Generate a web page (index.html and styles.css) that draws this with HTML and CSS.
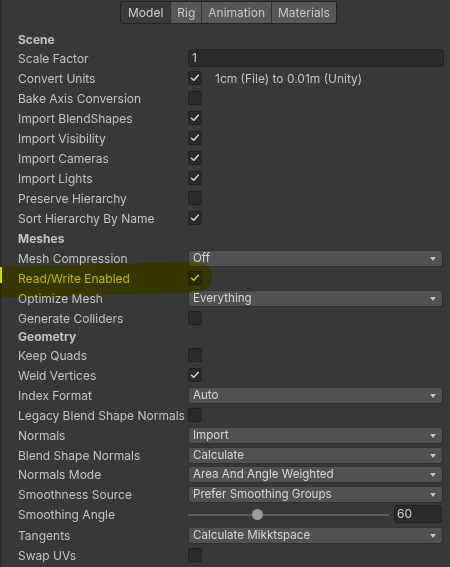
FILE: index.html
```html
<!DOCTYPE html>
<html>
<head>
<meta charset="utf-8">
<link rel="stylesheet" href="styles.css">
</head>
<body>
<div class="page">
  <div class="tabbar">
    <div class="tabs">
      <div class="tab active">Model</div>
      <div class="tab">Rig</div>
      <div class="tab">Animation</div>
      <div class="tab">Materials</div>
    </div>
  </div>

  <div class="form">
    <div class="row h19"><div class="label header">Scene</div></div>
    <div class="row"><div class="label">Scale Factor</div><div class="ctrl"><div class="textfield">1</div></div></div>
    <div class="row"><div class="label">Convert Units</div><div class="ctrl inline"><span class="cb on"><svg viewBox="0 0 14 14"><path d="M3.5 7.2 L5.8 9.3 L10.3 4.3"/></svg></span><span class="note">1cm (File) to 0.01m (Unity)</span></div></div>
    <div class="row"><div class="label">Bake Axis Conversion</div><div class="ctrl"><span class="cb"></span></div></div>
    <div class="row"><div class="label">Import BlendShapes</div><div class="ctrl"><span class="cb on"><svg viewBox="0 0 14 14"><path d="M3.5 7.2 L5.8 9.3 L10.3 4.3"/></svg></span></div></div>
    <div class="row"><div class="label">Import Visibility</div><div class="ctrl"><span class="cb on"><svg viewBox="0 0 14 14"><path d="M3.5 7.2 L5.8 9.3 L10.3 4.3"/></svg></span></div></div>
    <div class="row"><div class="label">Import Cameras</div><div class="ctrl"><span class="cb on"><svg viewBox="0 0 14 14"><path d="M3.5 7.2 L5.8 9.3 L10.3 4.3"/></svg></span></div></div>
    <div class="row"><div class="label">Import Lights</div><div class="ctrl"><span class="cb on"><svg viewBox="0 0 14 14"><path d="M3.5 7.2 L5.8 9.3 L10.3 4.3"/></svg></span></div></div>
    <div class="row"><div class="label">Preserve Hierarchy</div><div class="ctrl"><span class="cb"></span></div></div>
    <div class="row"><div class="label">Sort Hierarchy By Name</div><div class="ctrl"><span class="cb on"><svg viewBox="0 0 14 14"><path d="M3.5 7.2 L5.8 9.3 L10.3 4.3"/></svg></span></div></div>

    <div class="row"><div class="label header">Meshes</div></div>
    <div class="row"><div class="label">Mesh Compression</div><div class="ctrl"><div class="dropdown"><span>Off</span><i class="arrow"></i></div></div></div>
    <div class="row hl"><div class="label">Read/Write Enabled</div><div class="ctrl"><span class="cb on"><svg viewBox="0 0 14 14"><path d="M3.5 7.2 L5.8 9.3 L10.3 4.3"/></svg></span></div></div>
    <div class="row"><div class="label">Optimize Mesh</div><div class="ctrl"><div class="dropdown"><span>Everything</span><i class="arrow"></i></div></div></div>
    <div class="row h19"><div class="label">Generate Colliders</div><div class="ctrl"><span class="cb"></span></div></div>

    <div class="row h18"><div class="label header">Geometry</div></div>
    <div class="row"><div class="label">Keep Quads</div><div class="ctrl"><span class="cb"></span></div></div>
    <div class="row"><div class="label">Weld Vertices</div><div class="ctrl"><span class="cb on"><svg viewBox="0 0 14 14"><path d="M3.5 7.2 L5.8 9.3 L10.3 4.3"/></svg></span></div></div>
    <div class="row"><div class="label">Index Format</div><div class="ctrl"><div class="dropdown"><span>Auto</span><i class="arrow"></i></div></div></div>
    <div class="row"><div class="label">Legacy Blend Shape Normals</div><div class="ctrl"><span class="cb"></span></div></div>
    <div class="row"><div class="label">Normals</div><div class="ctrl"><div class="dropdown"><span>Import</span><i class="arrow"></i></div></div></div>
    <div class="row h19"><div class="label">Blend Shape Normals</div><div class="ctrl"><div class="dropdown"><span>Calculate</span><i class="arrow"></i></div></div></div>
    <div class="row"><div class="label">Normals Mode</div><div class="ctrl"><div class="dropdown"><span>Area And Angle Weighted</span><i class="arrow"></i></div></div></div>
    <div class="row"><div class="label">Smoothness Source</div><div class="ctrl"><div class="dropdown"><span>Prefer Smoothing Groups</span><i class="arrow"></i></div></div></div>
    <div class="row h21"><div class="label">Smoothing Angle</div><div class="ctrl slider"><div class="track"><div class="thumb"></div></div><div class="numfield">60</div></div></div>
    <div class="row"><div class="label">Tangents</div><div class="ctrl"><div class="dropdown"><span>Calculate Mikktspace</span><i class="arrow"></i></div></div></div>
    <div class="row"><div class="label">Swap UVs</div><div class="ctrl"><span class="cb"></span></div></div>
  </div>

  <div class="marker"></div>
  <div class="marker-edge"></div>
</div>
</body>
</html>
```
FILE: styles.css
```css
html, body {
  margin: 0;
  padding: 0;
  background: #383838;
}
body {
  width: 450px;
  height: 567px;
  overflow: hidden;
  font-family: Inter, "Liberation Sans", sans-serif;
  font-size: 12px;
  color: #c4c4c4;
}
.page {
  position: relative;
  width: 450px;
  height: 567px;
  box-sizing: border-box;
  border-left: 2px solid #2c2c2c;
  border-right: 1px solid #3e3e3e;
}
.tabbar {
  height: 30px;
  box-sizing: border-box;
  padding: 1px 0 0 6px;
  display: flex;
  justify-content: center;
}
.tabs {
  display: flex;
  height: 23px;
  box-sizing: border-box;
  border: 1px solid #232323;
  border-radius: 3px;
  overflow: hidden;
}
.tab {
  padding: 0 6px;
  line-height: 21px;
  background: #585858;
  color: #c8c8c8;
  border-left: 1px solid #303030;
}
.tab:first-child { border-left: none; }
.tab.active {
  background: #3a3a3a;
  color: #d0d0d0;
  padding: 0 7px;
}
.form {
  padding: 0 5px 0 16px;
}
.row {
  display: flex;
  height: 20px;
  align-items: flex-start;
}
.row.h18 { height: 18px; }
.row.h19 { height: 19px; }
.row.h21 { height: 21px; }
.label {
  width: 170px;
  flex: none;
  line-height: 20px;
  white-space: nowrap;
}
.h18 .label { line-height: 18px; }
.h19 .label { line-height: 19px; }
.header { font-weight: 700; }
.ctrl {
  flex: 1;
  min-width: 0;
  display: flex;
  align-items: flex-start;
}
.textfield {
  flex: 1;
  height: 18px;
  box-sizing: border-box;
  background: #2a2a2a;
  border: 1px solid #212121;
  border-radius: 3px;
  padding-left: 3px;
  line-height: 16px;
  color: #d2d2d2;
}
.cb {
  width: 14px;
  height: 14px;
  margin-top: 2px;
  box-sizing: border-box;
  background: #2a2a2a;
  border: 1px solid #202020;
  border-radius: 2px;
  display: block;
  flex: none;
}
.cb svg {
  display: block;
  width: 14px;
  height: 14px;
  margin: -1px;
}
.cb svg path {
  fill: none;
  stroke: #d8d8d8;
  stroke-width: 1.5;
  stroke-linecap: round;
  stroke-linejoin: round;
}
.note {
  margin-left: 13px;
  line-height: 20px;
}
.inline { align-items: flex-start; }
.dropdown {
  flex: 1;
  margin: 1px 1px 0 0;
  height: 17px;
  box-sizing: border-box;
  background: #515151;
  border: 1px solid #2f2f2f;
  border-top-color: #333;
  border-radius: 3px;
  display: flex;
  align-items: center;
  padding: 0 6px 0 4px;
  color: #d6d6d6;
  font-size: 11.6px;
  line-height: 15px;
}
.dropdown span { flex: 1; }
.arrow {
  width: 0;
  height: 0;
  border-left: 3.5px solid transparent;
  border-right: 3.5px solid transparent;
  border-top: 4px solid #c4c4c4;
  margin-top: 1px;
}
.slider { align-items: center; height: 21px; }
.track {
  position: relative;
  flex: 1;
  height: 2px;
  background: #5e5e5e;
  margin-right: 5px;
  margin-top: -2px;
}
.thumb {
  position: absolute;
  left: 64px;
  top: -5px;
  width: 11px;
  height: 11px;
  border-radius: 50%;
  background: #9c9c9c;
}
.numfield {
  width: 48px;
  height: 18px;
  box-sizing: border-box;
  align-self: flex-start;
  background: #2a2a2a;
  border: 1px solid #212121;
  border-radius: 3px;
  padding-left: 2px;
  line-height: 16px;
  color: #d2d2d2;
  margin-right: 2px;
}
.marker {
  position: absolute;
  left: -2px;
  top: 264px;
  width: 212px;
  height: 31px;
  background: #f4f400;
  mix-blend-mode: multiply;
  border-radius: 2px 18px 16px 2px / 2px 15px 15px 2px;
  transform: skewY(-1.5deg);
  pointer-events: none;
}
.marker-edge {
  position: absolute;
  left: -2px;
  top: 267px;
  width: 2px;
  height: 16px;
  background: #d6d600;
}
```
